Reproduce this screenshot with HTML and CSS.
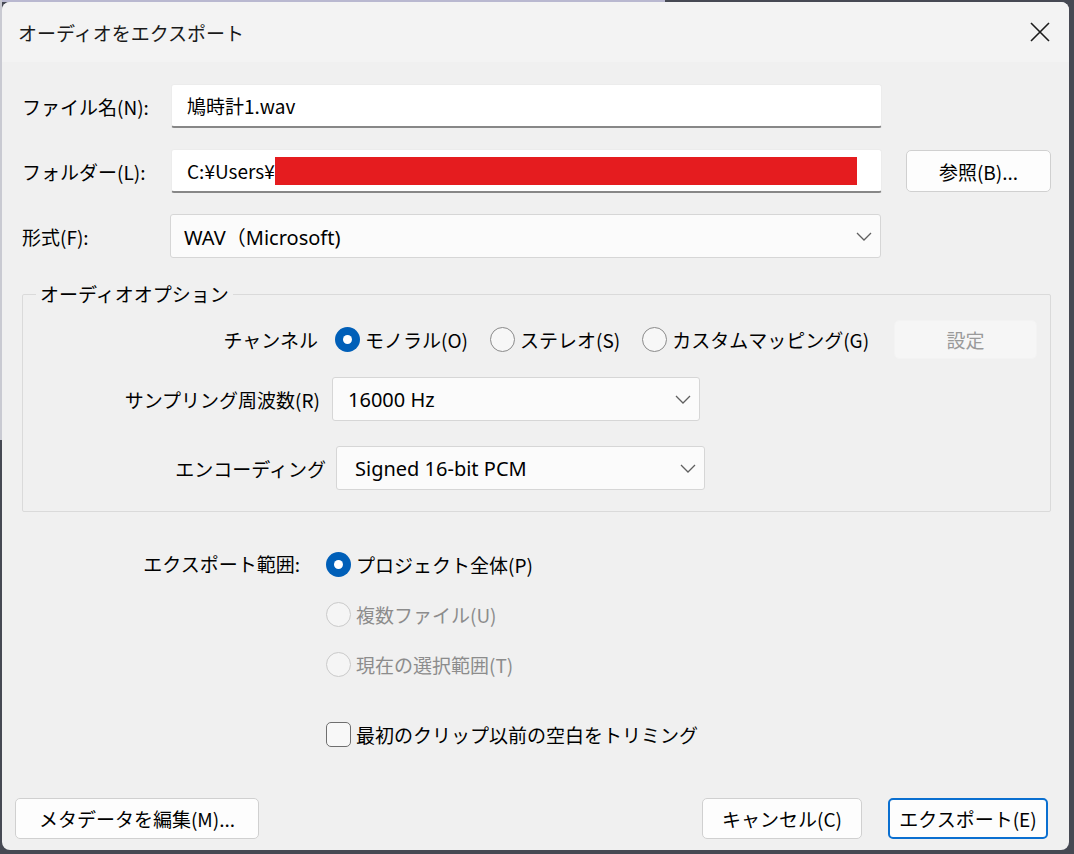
FILE: index.html
```html
<!DOCTYPE html>
<html lang="ja">
<head>
    <meta charset="UTF-8">
    <title>オーディオをエクスポート</title>
    <link rel="stylesheet" href="styles.css">
</head>
<body>

    <div class="window">
        <!-- Title bar -->
        <div class="titlebar">
            <span class="title">オーディオをエクスポート</span>
            <span class="close-btn">
                <svg width="20" height="20" viewBox="0 0 20 20">
                    <path d="M1 1 L19 19 M19 1 L1 19" stroke="#1b1b1b" stroke-width="1.6" fill="none"/>
                </svg>
            </span>
        </div>

        <div class="content">
            <!-- File rows -->
            <div class="file-rows">
                <div class="row">
                    <label class="row-label">ファイル名(N):</label>
                    <div class="textbox">鳩時計1.wav</div>
                </div>
                <div class="row">
                    <label class="row-label">フォルダー(L):</label>
                    <div class="textbox">C:¥Users¥<span class="redacted"></span></div>
                    <button class="btn browse-btn">参照(B)...</button>
                </div>
                <div class="row">
                    <label class="row-label">形式(F):</label>
                    <div class="select format-select">
                        <span>WAV（Microsoft)</span>
                        <svg class="chevron" width="16" height="9" viewBox="0 0 16 9"><polyline points="1,1 8,8 15,1" fill="none" stroke="#5f5f5f" stroke-width="1.3"/></svg>
                    </div>
                </div>
            </div>

            <!-- Audio options group -->
            <fieldset class="group">
                <legend>オーディオオプション</legend>

                <div class="opt-row channel-row">
                    <span class="opt-label">チャンネル</span>
                    <div class="channel-options">
                        <span class="choice"><span class="radio checked"></span>モノラル(O)</span>
                        <span class="choice"><span class="radio"></span>ステレオ(S)</span>
                        <span class="choice"><span class="radio"></span>カスタムマッピング(G)</span>
                        <button class="btn settings-btn" disabled>設定</button>
                    </div>
                </div>

                <div class="opt-row rate-row">
                    <span class="opt-label">サンプリング周波数(R)</span>
                    <div class="select rate-select">
                        <span>16000 Hz</span>
                        <svg class="chevron" width="16" height="9" viewBox="0 0 16 9"><polyline points="1,1 8,8 15,1" fill="none" stroke="#5f5f5f" stroke-width="1.3"/></svg>
                    </div>
                </div>

                <div class="opt-row encoding-row">
                    <span class="opt-label">エンコーディング</span>
                    <div class="select encoding-select">
                        <span>Signed 16-bit PCM</span>
                        <svg class="chevron" width="16" height="9" viewBox="0 0 16 9"><polyline points="1,1 8,8 15,1" fill="none" stroke="#5f5f5f" stroke-width="1.3"/></svg>
                    </div>
                </div>
            </fieldset>

            <!-- Export range -->
            <div class="range">
                <span class="range-label">エクスポート範囲:</span>
                <div class="range-options">
                    <span class="choice"><span class="radio checked"></span>プロジェクト全体(P)</span>
                    <span class="choice disabled"><span class="radio"></span>複数ファイル(U)</span>
                    <span class="choice disabled"><span class="radio"></span>現在の選択範囲(T)</span>
                    <span class="choice trim"><span class="checkbox"></span>最初のクリップ以前の空白をトリミング</span>
                </div>
            </div>
        </div>

        <!-- Buttons -->
        <div class="footer">
            <button class="btn metadata-btn">メタデータを編集(M)...</button>
            <div class="footer-right">
                <button class="btn dialog-btn">キャンセル(C)</button>
                <button class="btn dialog-btn default-btn">エクスポート(E)</button>
            </div>
        </div>
    </div>

</body>
</html>
```

FILE: styles.css
```css
/* Base */
body {
    margin: 0;
    padding: 2px;
    background:
        linear-gradient(#c9cad2, #c9cad2) 0 0 / 2px 440px no-repeat,
        linear-gradient(#b9b8d0, #b9b8d0) 0 0 / 665px 2px no-repeat,
        #464953;
    font-family: "Noto Sans CJK JP", sans-serif;
    font-size: 19px;
    color: #000;
}
.window {
    width: 1067px;
    height: 848px;
    background-color: #f0f0f0;
    border-radius: 8px;
    overflow: hidden;
    display: flex;
    flex-direction: column;
}

/* Title bar */
.titlebar {
    height: 60px;
    flex-shrink: 0;
    background-color: #f3f3f3;
    display: flex;
    align-items: center;
    justify-content: space-between;
    padding: 0 19px 0 16px;
}
.title {
    font-size: 19px;
    color: #1a1a1a;
}
.close-btn {
    display: flex;
}

.content {
    padding: 22px 18px 0 20px;
}

/* File rows */
.file-rows {
    display: flex;
    flex-direction: column;
    gap: 21px;
}
.row {
    display: flex;
    align-items: center;
    height: 44px;
}
.row-label {
    width: 149px;
    flex-shrink: 0;
}
.textbox {
    width: 694px;
    height: 41px;
    background-color: #fff;
    border: 1px solid #ececec;
    border-bottom: 2px solid #878787;
    border-radius: 3px;
    padding-left: 15px;
    display: flex;
    align-items: center;
    box-sizing: content-box;
}
.redacted {
    display: inline-block;
    width: 582px;
    height: 28px;
    background-color: #e51c1f;
}

.select {
    height: 44px;
    background-color: #fbfbfb;
    border: 1px solid #d6d6d6;
    border-radius: 3px;
    display: flex;
    align-items: center;
    justify-content: space-between;
    padding: 0 7px 0 13px;
    font-family: "Noto Sans", "Noto Sans CJK JP", sans-serif;
    font-size: 20px;
    box-sizing: border-box;
}
.format-select {
    width: 711px;
    margin-left: -1px;
}

/* Buttons */
.btn {
    font-family: "Noto Sans CJK JP", sans-serif;
    font-size: 19px;
    color: #000;
    background-color: #fdfdfd;
    border: 1px solid #d0d0d0;
    border-radius: 5px;
    padding: 0;
}
.browse-btn {
    width: 145px;
    height: 42px;
    margin-left: 24px;
}

/* Group box */
.group {
    margin: 24px 0 0 0;
    padding: 14px 0 21px 0;
    border: 1px solid #dadada;
    border-radius: 2px;
    width: 1029px;
    box-sizing: border-box;
}
.group legend {
    margin-left: 13px;
    padding: 0 4px;
    line-height: 24px;
}
.opt-row {
    display: flex;
    align-items: center;
}
.opt-label {
    width: 297px;
    text-align: right;
    flex-shrink: 0;
    margin-right: 12px;
}
.channel-row {
    height: 39px;
}
.channel-row .opt-label {
    width: 295px;
    margin-right: 17px;
}
.channel-options {
    display: flex;
    align-items: center;
    gap: 22px;
}
.settings-btn {
    width: 143px;
    height: 39px;
    margin-left: 3px;
    color: #9a9a9a;
    background-color: #f6f6f6;
    border-color: #f3f3f3;
}
.rate-row {
    margin-top: 18px;
}
.rate-select {
    width: 368px;
    padding-left: 15px;
}
.encoding-row {
    margin-top: 25px;
}
.encoding-row .opt-label {
    width: 303px;
    margin-right: 10px;
}
.encoding-select {
    width: 369px;
    padding-left: 18px;
}
.chevron {
    margin-right: 1px;
}

/* Radios and checkbox */
.choice {
    display: flex;
    align-items: center;
    gap: 5px;
    white-space: nowrap;
}
.radio {
    width: 25px;
    height: 25px;
    border-radius: 50%;
    border: 1.5px solid #8a8a8a;
    background-color: #f7f7f7;
    box-sizing: border-box;
    flex-shrink: 0;
    position: relative;
}
.radio.checked {
    border: none;
    background-color: #005fb8;
}
.radio.checked::after {
    content: "";
    position: absolute;
    left: 8px;
    top: 8px;
    width: 9px;
    height: 9px;
    border-radius: 50%;
    background-color: #fff;
}
.choice.disabled {
    color: #8c8c8c;
}
.choice.disabled .radio {
    border-color: #cacaca;
    background-color: #f5f5f5;
}
.checkbox {
    width: 25px;
    height: 25px;
    border: 1.5px solid #6f6f6f;
    border-radius: 5px;
    background-color: #f8f8f8;
    box-sizing: border-box;
    flex-shrink: 0;
}

/* Export range */
.range {
    display: grid;
    grid-template-columns: 278px auto;
    column-gap: 26px;
    margin-top: 37px;
}
.range-label {
    text-align: right;
    height: 30px;
    line-height: 30px;
}
.range-options {
    display: flex;
    flex-direction: column;
    gap: 20px;
}
.range-options .choice {
    height: 30px;
}
.choice.trim {
    margin-top: 20px;
}

/* Footer */
.footer {
    margin-top: auto;
    display: flex;
    justify-content: space-between;
    padding: 0 21px 11px 13px;
}
.metadata-btn {
    width: 244px;
    height: 41px;
}
.footer-right {
    display: flex;
    gap: 26px;
}
.dialog-btn {
    width: 160px;
    height: 41px;
}
.default-btn {
    border: 2px solid #0a6fd0;
}
```
